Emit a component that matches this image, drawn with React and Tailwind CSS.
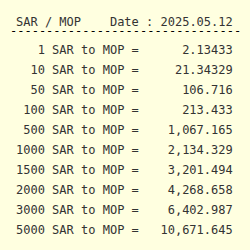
import React from 'react';

const rates = [
  ['1', '2.13433'],
  ['10', '21.34329'],
  ['50', '106.716'],
  ['100', '213.433'],
  ['500', '1,067.165'],
  ['1000', '2,134.329'],
  ['1500', '3,201.494'],
  ['2000', '4,268.658'],
  ['3000', '6,402.987'],
  ['5000', '10,671.645'],
];

export default function App() {
  return (
    <div className="w-[250px] h-[250px] overflow-hidden bg-[#ffffe0] text-[#333] text-[12px] font-['DejaVu_Sans_Mono',monospace] whitespace-pre pl-[16px]">
      <div className="pt-[16px] leading-[12px]">SAR / MOP    Date : 2025.05.12</div>
      <div className="ml-[-6px] leading-[6px] text-black">{'-'.repeat(32)}</div>
      <div className="mt-[6px]">
        {rates.map(([amount, value]) => (
          <div key={amount} className="flex leading-[20px]">
            <span className="w-[4ch] text-right">{amount}</span>
            <span> SAR to MOP =</span>
            <span className="w-[13ch] text-right">{value}</span>
          </div>
        ))}
      </div>
    </div>
  );
}
